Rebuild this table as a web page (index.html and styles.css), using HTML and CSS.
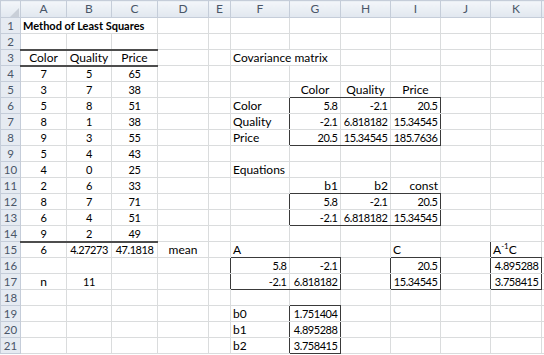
FILE: index.html
```html
<!DOCTYPE html>
<html lang="en">
<head>
  <meta charset="UTF-8">
  <title>Method of Least Squares</title>
  <link rel="stylesheet" href="styles.css">
</head>
<body>
  <table class="sheet">
    <colgroup>
      <col class="w-rh"><col class="w-a"><col class="w-b"><col class="w-c"><col class="w-d"><col class="w-e">
      <col class="w-f"><col class="w-g"><col class="w-h"><col class="w-i"><col class="w-j"><col class="w-k"><col class="w-l">
    </colgroup>
    <thead>
      <tr>
        <th class="corner"><svg width="9" height="9" viewBox="0 0 9 9"><polygon points="9,0 9,9 0,9" fill="#c9cfd8"/></svg></th>
        <th>A</th><th>B</th><th>C</th><th>D</th><th>E</th><th>F</th><th>G</th><th>H</th><th>I</th><th>J</th><th>K</th><th></th>
      </tr>
    </thead>
    <tbody>
      <tr><th>1</th><td class="bold" colspan="3">Method of Least Squares</td><td></td><td></td><td></td><td></td><td></td><td></td><td></td><td></td><td></td></tr>
      <tr><th>2</th><td class="tb"></td><td class="tb"></td><td class="tb"></td><td></td><td></td><td></td><td></td><td></td><td></td><td></td><td></td><td></td></tr>
      <tr><th>3</th><td class="ctr tb">Color</td><td class="ctr tb">Quality</td><td class="ctr tb">Price</td><td></td><td></td><td colspan="2">Covariance matrix</td><td></td><td></td><td></td><td></td><td></td></tr>
      <tr><th>4</th><td class="ctr v">7</td><td class="ctr v">5</td><td class="ctr v">65</td><td></td><td></td><td></td><td></td><td></td><td></td><td></td><td></td><td></td></tr>
      <tr><th>5</th><td class="ctr v">3</td><td class="ctr v">7</td><td class="ctr v">38</td><td></td><td></td><td></td><td class="ctr bb">Color</td><td class="ctr bb">Quality</td><td class="ctr bb">Price</td><td></td><td></td><td></td></tr>
      <tr><th>6</th><td class="ctr v">5</td><td class="ctr v">8</td><td class="ctr v">51</td><td></td><td></td><td class="br">Color</td><td class="num v">5.8</td><td class="num v">-2.1</td><td class="num v br">20.5</td><td></td><td></td><td></td></tr>
      <tr><th>7</th><td class="ctr v">8</td><td class="ctr v">1</td><td class="ctr v">38</td><td></td><td></td><td class="br">Quality</td><td class="num v">-2.1</td><td class="num v">6.818182</td><td class="num v br">15.34545</td><td></td><td></td><td></td></tr>
      <tr><th>8</th><td class="ctr v">9</td><td class="ctr v">3</td><td class="ctr v">55</td><td></td><td></td><td class="br">Price</td><td class="num v bb">20.5</td><td class="num v bb">15.34545</td><td class="num v bb br">185.7636</td><td></td><td></td><td></td></tr>
      <tr><th>9</th><td class="ctr v">5</td><td class="ctr v">4</td><td class="ctr v">43</td><td></td><td></td><td></td><td></td><td></td><td></td><td></td><td></td><td></td></tr>
      <tr><th>10</th><td class="ctr v">4</td><td class="ctr v">0</td><td class="ctr v">25</td><td></td><td></td><td>Equations</td><td></td><td></td><td></td><td></td><td></td><td></td></tr>
      <tr><th>11</th><td class="ctr v">2</td><td class="ctr v">6</td><td class="ctr v">33</td><td></td><td></td><td></td><td class="num bb">b1</td><td class="num bb">b2</td><td class="num bb">const</td><td></td><td></td><td></td></tr>
      <tr><th>12</th><td class="ctr v">8</td><td class="ctr v">7</td><td class="ctr v">71</td><td></td><td></td><td class="br"></td><td class="num v">5.8</td><td class="num v">-2.1</td><td class="num v br">20.5</td><td></td><td></td><td></td></tr>
      <tr><th>13</th><td class="ctr v">6</td><td class="ctr v">4</td><td class="ctr v">51</td><td></td><td></td><td class="br"></td><td class="num v bb">-2.1</td><td class="num v bb">6.818182</td><td class="num v bb br">15.34545</td><td></td><td></td><td></td></tr>
      <tr><th>14</th><td class="ctr v tb">9</td><td class="ctr v tb">2</td><td class="ctr v tb">49</td><td></td><td></td><td></td><td></td><td></td><td></td><td></td><td></td><td></td></tr>
      <tr><th>15</th><td class="ctr v">6</td><td class="ctr v">4.27273</td><td class="ctr v">47.1818</td><td class="ctr">mean</td><td></td><td class="bb">A</td><td class="bb"></td><td></td><td class="bb">C</td><td class="br"></td><td class="bb">A<sup>-1</sup>C</td><td></td></tr>
      <tr><th>16</th><td></td><td></td><td></td><td></td><td class="br"></td><td class="num v">5.8</td><td class="num v br">-2.1</td><td class="br"></td><td class="num v br">20.5</td><td class="br"></td><td class="num v br">4.895288</td><td></td></tr>
      <tr><th>17</th><td class="ctr">n</td><td class="ctr v">11</td><td></td><td></td><td class="br"></td><td class="num v bb">-2.1</td><td class="num v bb br">6.818182</td><td class="br"></td><td class="num v bb br">15.34545</td><td class="br"></td><td class="num v bb br">3.758415</td><td></td></tr>
      <tr><th>18</th><td></td><td></td><td></td><td></td><td></td><td></td><td class="bb"></td><td></td><td></td><td></td><td></td><td></td></tr>
      <tr><th>19</th><td></td><td></td><td></td><td></td><td></td><td class="br">b0</td><td class="num v br">1.751404</td><td></td><td></td><td></td><td></td><td></td></tr>
      <tr><th>20</th><td></td><td></td><td></td><td></td><td></td><td class="br">b1</td><td class="num v br">4.895288</td><td></td><td></td><td></td><td></td><td></td></tr>
      <tr><th>21</th><td></td><td></td><td></td><td></td><td></td><td class="br">b2</td><td class="num v br bb">3.758415</td><td></td><td></td><td></td><td></td><td></td></tr>
    </tbody>
  </table>
</body>
</html>
```

FILE: styles.css
```css
/* worksheet, Excel 2010 look */
* { margin: 0; padding: 0; box-sizing: border-box; }

body {
  background: #fff;
  overflow: hidden;
  font-family: Lato, "Open Sans", sans-serif;
  font-size: 12px;
  color: #000;
}

.sheet {
  border-collapse: collapse;
  table-layout: fixed;
  width: 544px;
}

/* column widths */
.w-rh { width: 20px; }
.w-a { width: 46px; }
.w-b { width: 45px; }
.w-c { width: 46px; }
.w-d { width: 51px; }
.w-e { width: 22px; }
.w-f { width: 59px; }
.w-g { width: 51px; }
.w-h { width: 50px; }
.w-i { width: 50px; }
.w-j { width: 50px; }
.w-k { width: 51px; }
.w-l { width: 3px; }

.sheet td,
.sheet th {
  height: 16px;
  border: 1px solid #dadcdd;
  padding: 0 2px;
  white-space: nowrap;
  overflow: visible;
  line-height: 14px;
  vertical-align: bottom;
}

/* headers */
.sheet thead th {
  height: 17px;
  background: linear-gradient(#f3f6fa, #e1e7ef);
  border-color: #c5cdd9;
  color: #4a5668;
  font-size: 12px;
  font-weight: normal;
  text-align: center;
  vertical-align: middle;
}
.sheet tbody th {
  background: #e6ebf2;
  border-color: #c5cdd9;
  color: #4a5668;
  font-size: 11.5px;
  font-weight: normal;
  text-align: center;
  vertical-align: middle;
  padding: 0;
}
.sheet thead th.corner {
  padding: 0 1px 0 0;
  text-align: right;
  vertical-align: bottom;
  line-height: 0;
}

/* cell formats */
.bold { font-weight: bold; font-size: 11px; }
.ctr { text-align: center; }
.num { text-align: right; }
.v { font-size: 11px; letter-spacing: -0.45px; }
.num.v { padding-right: 2.5px; }

sup {
  font-size: 8px;
  line-height: 0;
  vertical-align: 5px;
}

/* borders */
.sheet .tb { border-bottom: 2px solid #4d4d4d; }
.sheet .bb { border-bottom: 1px solid #3a3a3a; }
.sheet .br { border-right: 1px solid #3a3a3a; }
```
